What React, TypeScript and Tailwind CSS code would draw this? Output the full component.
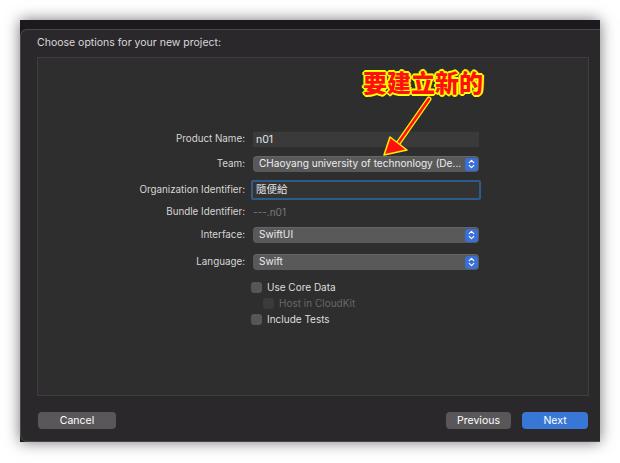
import React from 'react';

const font = { fontFamily: 'Inter, "Liberation Sans", "Noto Sans CJK TC", sans-serif' };

const Stepper = () => (
  <div className="ml-auto mr-[1px] shrink-0 w-[13px] h-[13px] rounded-[3px] bg-[#3a6fd6] flex items-center justify-center">
    <svg width="7" height="10" viewBox="0 0 7 10" fill="none" stroke="#fff" strokeWidth="1.2" strokeLinecap="round" strokeLinejoin="round">
      <path d="M1.2 3.6 3.5 1.4 5.8 3.6" />
      <path d="M1.2 6.4 3.5 8.6 5.8 6.4" />
    </svg>
  </div>
);

const Popup = ({ value }: { value: string }) => (
  <div className="w-[226px] h-[16px] rounded-[4px] bg-[#5a595a] flex items-center pl-[6px] text-[10.1px] text-[#ececec] shadow-[inset_0_1px_0_rgba(255,255,255,0.08)]">
    <span className="whitespace-nowrap overflow-hidden">{value}</span>
    <Stepper />
  </div>
);

const Label = ({ children }: { children: React.ReactNode }) => (
  <div className="w-[207px] text-right text-[9.8px] text-[#d6d6d6]">{children}</div>
);

const Row = ({ label, children, className = '' }: { label: string; children: React.ReactNode; className?: string }) => (
  <div className={`flex items-center gap-[8px] ${className}`}>
    <Label>{label}</Label>
    {children}
  </div>
);

const Check = ({ label, disabled, className = '' }: { label: string; disabled?: boolean; className?: string }) => (
  <div className={`flex items-center h-[12px] ${className}`}>
    <div className={`w-[11px] h-[11px] rounded-[3px] ${disabled ? 'bg-[#3c3b3c]' : 'bg-[#575657]'}`} />
    <span className={`ml-[5px] text-[10px] ${disabled ? 'text-[#686768]' : 'text-[#dedede]'}`}>{label}</span>
  </div>
);

const Button = ({ children, blue, w }: { children: React.ReactNode; blue?: boolean; w: string }) => (
  <div
    className={`${w} h-[17px] rounded-[4px] flex items-center justify-center text-[10.5px] text-white ${
      blue ? 'bg-[#3877d6]' : 'bg-[#5a575a]'
    }`}
  >
    {children}
  </div>
);

export default function App() {
  return (
    <div className="relative w-[620px] h-[463px] bg-white overflow-hidden" style={font}>
      <div className="pt-[20px] pl-[20px]">
        <div className="w-[580px] h-[422px] bg-[#1c1a1e] shadow-[0_0_14px_rgba(0,0,0,0.55)] pt-[9px]">
          <div className="h-[413px] bg-[#2b282c] rounded-l-[7px] border-l border-t border-b border-[#4a474b] flex flex-col">
            <div className="pt-[6px] pl-[16px] text-[10.5px] leading-[14px] text-[#d9d9d9]">
              Choose options for your new project:
            </div>
            <div className="mt-[7px] ml-[16px] w-[552px] h-[339px] bg-[#2e2e2e] border border-[#3f3d40] pt-[73px] flex flex-col">
              <Row label="Product Name:">
                <div className="w-[226px] h-[16px] bg-[#3a3a3a] border-t border-[#313131] flex items-center pl-[3px] text-[10.5px] text-[#e6e6e6]">
                  n01
                </div>
              </Row>
              <Row label="Team:" className="mt-[9px]">
                <Popup value="CHaoyang university of technonlogy (De..." />
              </Row>
              <Row label="Organization Identifier:" className="mt-[8px]">
                <div className="-ml-[2px] w-[230px] h-[20px] rounded-[2px] border-[2px] border-[#2f5c86] bg-[#333333] flex items-center pl-[3px] text-[10.5px] text-[#e6e6e6]">
                  隨便給
                </div>
              </Row>
              <Row label="Bundle Identifier:" className="mt-[4px] h-[16px]">
                <span className="text-[10px] text-[#7a797a]">---.n01</span>
              </Row>
              <Row label="Interface:" className="mt-[7px]">
                <Popup value="SwiftUI" />
              </Row>
              <Row label="Language:" className="mt-[11px]">
                <Popup value="Swift" />
              </Row>
              <div className="pl-[213px] flex flex-col">
                <Check label="Use Core Data" className="mt-[11px]" />
                <Check label="Host in CloudKit" disabled className="mt-[4px] ml-[12px]" />
                <Check label="Include Tests" className="mt-[4px]" />
              </div>
            </div>
            <div className="mt-[16px] ml-[17px] w-[550px] flex items-center">
              <Button w="w-[78px]">Cancel</Button>
              <div className="ml-auto flex gap-[11px]">
                <Button w="w-[65px]">Previous</Button>
                <Button w="w-[66px]" blue>
                  Next
                </Button>
              </div>
            </div>
          </div>
        </div>
      </div>

      <div
        className="absolute left-[363px] top-[70px] text-[24px] leading-none font-black text-[#ff1010] [text-shadow:1px_1px_0_#ff0,-1px_-1px_0_#ff0,1px_-1px_0_#ff0,-1px_1px_0_#ff0,0_2px_0_#ff0,2px_0_0_#ff0,0_-2px_0_#ff0,-2px_0_0_#ff0]"
        style={{ fontFamily: '"Noto Sans CJK TC", sans-serif' }}
      >
        要建立新的
      </div>
      <svg className="absolute left-0 top-0 pointer-events-none" width="620" height="463">
        <line x1="429" y1="99" x2="397" y2="145" stroke="#ffef00" strokeWidth="5" strokeLinecap="round" />
        <line x1="429" y1="99" x2="397" y2="145" stroke="#ff1010" strokeWidth="2.5" strokeLinecap="round" />
        <polygon points="384,155 390,137 407,150" fill="#ff1010" stroke="#ffef00" strokeWidth="1.5" strokeLinejoin="round" />
      </svg>
    </div>
  );
}
